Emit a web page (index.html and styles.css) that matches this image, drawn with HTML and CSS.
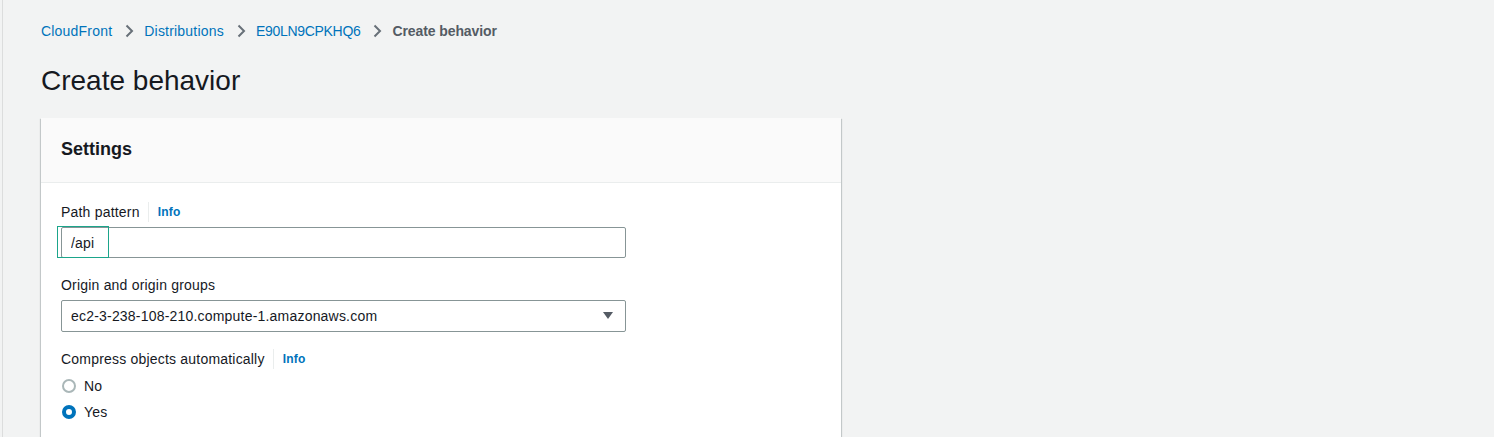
FILE: index.html
```html
<!DOCTYPE html>
<html lang="en">
<head>
    <meta charset="UTF-8">
    <meta name="viewport" content="width=device-width, initial-scale=1.0">
    <title>Create behavior | CloudFront</title>
    <link rel="stylesheet" href="styles.css">
</head>
<body>
    <div class="page">
        <nav class="breadcrumbs">
            <a href="#">CloudFront</a>
            <span class="sep"><svg width="16" height="16" viewBox="0 0 16 16"><path d="M5.5 2.5l5.5 5.5-5.5 5.5" fill="none" stroke="#687078" stroke-width="2"/></svg></span>
            <a href="#">Distributions</a>
            <span class="sep"><svg width="16" height="16" viewBox="0 0 16 16"><path d="M5.5 2.5l5.5 5.5-5.5 5.5" fill="none" stroke="#687078" stroke-width="2"/></svg></span>
            <a href="#" class="id">E90LN9CPKHQ6</a>
            <span class="sep"><svg width="16" height="16" viewBox="0 0 16 16"><path d="M5.5 2.5l5.5 5.5-5.5 5.5" fill="none" stroke="#687078" stroke-width="2"/></svg></span>
            <span class="current">Create behavior</span>
        </nav>

        <h1>Create behavior</h1>

        <div class="card">
            <div class="card-header">
                <h2>Settings</h2>
            </div>
            <div class="card-body">
                <div class="field">
                    <div class="label">Path pattern <span class="info">Info</span></div>
                    <div class="input-wrap">
                        <input type="text" class="input" value="/api">
                        <div class="highlight"></div>
                    </div>
                </div>

                <div class="field">
                    <div class="label">Origin and origin groups</div>
                    <div class="select">
                        <span>ec2-3-238-108-210.compute-1.amazonaws.com</span>
                        <svg width="12" height="12" viewBox="0 0 12 12"><path d="M1 2h10L6 9z" fill="#545b64"/></svg>
                    </div>
                </div>

                <div class="field">
                    <div class="label">Compress objects automatically <span class="info">Info</span></div>
                    <div class="radios">
                        <label class="radio"><span class="dot"></span>No</label>
                        <label class="radio"><span class="dot checked"></span>Yes</label>
                    </div>
                </div>
            </div>
        </div>
    </div>
</body>
</html>
```

FILE: styles.css
```css
* {
    margin: 0;
    padding: 0;
    box-sizing: border-box;
}

body {
    font-family: "Liberation Sans", Arial, sans-serif;
    background: #f2f3f3;
    color: #16191f;
    font-size: 14px;
    letter-spacing: 0.2px;
    height: 437px;
    overflow: hidden;
}

.page {
    margin-left: 2px;
    border-left: 1px solid #dcdddd;
    min-height: 100vh;
    padding: 20px 0 0 38px;
}

.breadcrumbs {
    display: flex;
    align-items: center;
    height: 22px;
    font-size: 14px;
}

.breadcrumbs a {
    color: #0073bb;
    text-decoration: none;
}

.breadcrumbs .id {
    letter-spacing: -0.3px;
}

.breadcrumbs .sep {
    display: flex;
    margin: 0 7px 0 9px;
}

.breadcrumbs .current {
    color: #545b64;
    font-weight: 700;
    letter-spacing: -0.1px;
}

h1 {
    font-size: 28px;
    font-weight: 400;
    letter-spacing: 0;
    line-height: 36px;
    margin-top: 21px;
    margin-bottom: 19px;
}

.card {
    width: 800px;
    background: #fff;
    box-shadow: 0 1px 1px 0 rgba(0, 28, 36, 0.3), 1px 1px 1px 0 rgba(0, 28, 36, 0.15), -1px 1px 1px 0 rgba(0, 28, 36, 0.15);
    min-height: 400px;
}

.card-header {
    background: #fafafa;
    border-bottom: 1px solid #eaeded;
    height: 65px;
    padding: 19px 20px;
}

.card-header h2 {
    font-size: 18px;
    font-weight: 700;
    letter-spacing: 0;
    line-height: 24px;
}

.card-body {
    padding: 19px 20px;
}

.field {
    margin-bottom: 17px;
}

.label {
    display: flex;
    align-items: center;
    line-height: 20px;
    margin-bottom: 5px;
}

.info {
    font-size: 12px;
    font-weight: 700;
    color: #0073bb;
    border-left: 1px solid #eaeded;
    margin-left: 8px;
    padding-left: 9px;
    line-height: 20px;
}

.input-wrap {
    position: relative;
    width: 565px;
}

.input {
    width: 565px;
    height: 31px;
    border: 1px solid #879596;
    border-radius: 2px;
    padding: 0 9px;
    font: inherit;
    letter-spacing: inherit;
    color: #16191f;
    outline: none;
}

.highlight {
    position: absolute;
    left: -4px;
    top: -1px;
    width: 52px;
    height: 32px;
    border: 1px solid #1ba58b;
}

.select {
    display: flex;
    align-items: center;
    justify-content: space-between;
    width: 565px;
    height: 32px;
    border: 1px solid #879596;
    border-radius: 2px;
    padding: 0 11px 0 9px;
}

.radios {
    display: flex;
    flex-direction: column;
    gap: 6px;
    padding-top: 2px;
}

.radio {
    display: flex;
    align-items: center;
    line-height: 20px;
    gap: 8px;
}

.dot {
    width: 14px;
    height: 14px;
    border: 2px solid #aab7b8;
    border-radius: 50%;
    background: #fff;
    margin-left: 1px;
}

.dot.checked {
    border: 4px solid #0073bb;
}
```
